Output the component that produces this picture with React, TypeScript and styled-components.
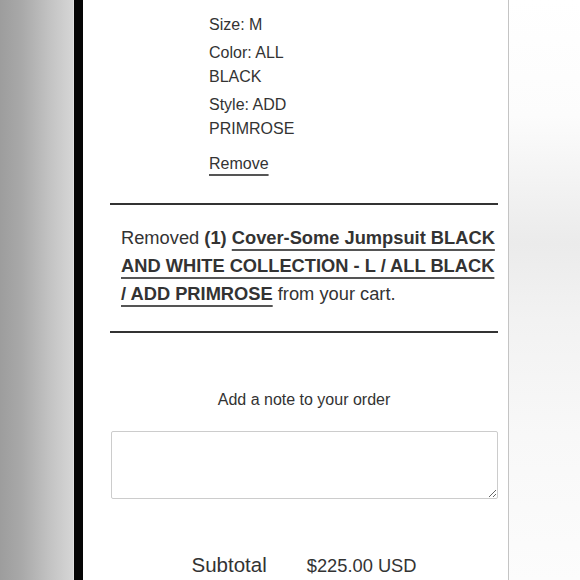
import * as React from 'react';
import styled, { createGlobalStyle } from 'styled-components';

const GlobalStyle = createGlobalStyle`
	html, body {
		margin: 0;
		padding: 0;
		background: #ffffff;
	}
	body {
		font-family: "Liberation Sans", Arial, Helvetica, sans-serif;
		color: #333333;
	}
`;

const Page = styled.div`
	display: flex;
	width: 580px;
	height: 580px;
	overflow: hidden;
`;

/* Shaded strip at the far left of the photo */
const LeftShade = styled.div`
	width: 73px;
	flex-shrink: 0;
	border-right: 1px solid #e2e2e2;
	background: linear-gradient(90deg, #9d9d9d 0%, #a9a9a9 30%, #c4c4c4 70%, #d6d6d6 100%);
`;

const Bezel = styled.div`
	width: 9px;
	flex-shrink: 0;
	background: #050505;
`;

const Drawer = styled.div`
	width: 426px;
	flex-shrink: 0;
	box-sizing: border-box;
	padding: 13px 10px 0 27px;
	border-right: 1px solid #c4c4c4;
	background: #ffffff;
	display: flex;
	flex-direction: column;
`;

const RightShade = styled.div`
	flex: 1;
	background: linear-gradient(180deg, #ffffff 0%, #fcfcfc 20%, #f0f0f0 35%, #ebebeb 42%, #f2f2f2 55%, #f8f8f8 75%, #fcfcfc 100%);
`;

const Meta = styled.div`
	margin-left: 99px;
	display: flex;
	flex-direction: column;
	gap: 4px;
	font-size: 16px;
	line-height: 24px;
	color: #333333;
	width: 110px;
`;

const MetaItem = styled.div``;

/* Underlined links share the same thick grey rule */
const RemoveLink = styled.a`
	align-self: flex-start;
	margin-top: 7px;
	line-height: 24px;
	color: #333333;
	text-decoration: underline 2px #555555;
	text-underline-offset: 5px;
	cursor: pointer;
`;

const Notice = styled.div`
	margin-top: 27px;
	border-top: 2px solid #333333;
	border-bottom: 2px solid #333333;
	padding: 19px 0 23px 11px;
	font-size: 18.3px;
	line-height: 28px;
	color: #333333;
`;

const Strong = styled.strong`
	font-weight: bold;
`;

const ProductLink = styled.a`
	font-weight: bold;
	color: #333333;
	text-decoration: underline 2px #555555;
	text-underline-offset: 5px;
`;

const NoteLabel = styled.label`
	margin-top: 55px;
	text-align: center;
	font-size: 16px;
	line-height: 24px;
	color: #333333;
`;

const NoteField = styled.textarea`
	margin: 19px 0 0 1px;
	height: 68px;
	box-sizing: border-box;
	border: 1px solid #cccccc;
	border-radius: 2px;
	padding: 8px;
	font-family: inherit;
	font-size: 16px;
	resize: vertical;
	outline: none;
`;

const Totals = styled.div`
	margin-top: 52px;
	display: flex;
	justify-content: center;
	align-items: baseline;
	gap: 40px;
	line-height: 28px;
	color: #333333;
`;

const TotalLabel = styled.span`
	font-size: 20.5px;
`;

const TotalAmount = styled.span`
	font-size: 18.3px;
`;

export default function App() {
	return (
		<>
			<GlobalStyle />
			<Page>
				<LeftShade />
				<Bezel />
				<Drawer>
					<Meta>
						<MetaItem>Size: M</MetaItem>
						<MetaItem>Color: ALL BLACK</MetaItem>
						<MetaItem>Style: ADD PRIMROSE</MetaItem>
						<RemoveLink>Remove</RemoveLink>
					</Meta>
					<Notice>
						Removed <Strong>(1)</Strong>{' '}
						<ProductLink>Cover-Some Jumpsuit BLACK AND WHITE COLLECTION - L / ALL BLACK / ADD PRIMROSE</ProductLink>{' '}
						from your cart.
					</Notice>
					<NoteLabel htmlFor="cart-note">Add a note to your order</NoteLabel>
					<NoteField id="cart-note" />
					<Totals>
						<TotalLabel>Subtotal</TotalLabel>
						<TotalAmount>$225.00 USD</TotalAmount>
					</Totals>
				</Drawer>
				<RightShade />
			</Page>
		</>
	);
}
